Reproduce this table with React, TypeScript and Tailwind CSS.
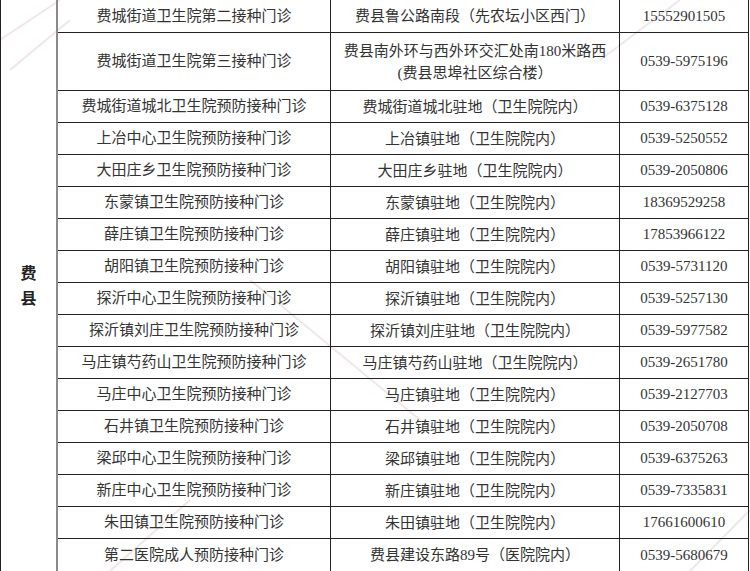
import React from "react";

type Row = { name: string; addr: string[]; phone: string; h: string };

const rows: Row[] = [
  { name: "费城街道卫生院第二接种门诊", addr: ["费县鲁公路南段（先农坛小区西门）"], phone: "15552901505", h: "h-[33px]" },
  { name: "费城街道卫生院第三接种门诊", addr: ["费县南外环与西外环交汇处南180米路西", "(费县思埠社区综合楼）"], phone: "0539-5975196", h: "h-[58px]" },
  { name: "费城街道城北卫生院预防接种门诊", addr: ["费城街道城北驻地（卫生院院内）"], phone: "0539-6375128", h: "h-[32px]" },
  { name: "上冶中心卫生院预防接种门诊", addr: ["上冶镇驻地（卫生院院内）"], phone: "0539-5250552", h: "h-[32px]" },
  { name: "大田庄乡卫生院预防接种门诊", addr: ["大田庄乡驻地（卫生院院内）"], phone: "0539-2050806", h: "h-[32px]" },
  { name: "东蒙镇卫生院预防接种门诊", addr: ["东蒙镇驻地（卫生院院内）"], phone: "18369529258", h: "h-[32px]" },
  { name: "薛庄镇卫生院预防接种门诊", addr: ["薛庄镇驻地（卫生院院内）"], phone: "17853966122", h: "h-[32px]" },
  { name: "胡阳镇卫生院预防接种门诊", addr: ["胡阳镇驻地（卫生院院内）"], phone: "0539-5731120", h: "h-[32px]" },
  { name: "探沂中心卫生院预防接种门诊", addr: ["探沂镇驻地（卫生院院内）"], phone: "0539-5257130", h: "h-[32px]" },
  { name: "探沂镇刘庄卫生院预防接种门诊", addr: ["探沂镇刘庄驻地（卫生院院内）"], phone: "0539-5977582", h: "h-[32px]" },
  { name: "马庄镇芍药山卫生院预防接种门诊", addr: ["马庄镇芍药山驻地（卫生院院内）"], phone: "0539-2651780", h: "h-[32px]" },
  { name: "马庄中心卫生院预防接种门诊", addr: ["马庄镇驻地（卫生院院内）"], phone: "0539-2127703", h: "h-[32px]" },
  { name: "石井镇卫生院预防接种门诊", addr: ["石井镇驻地（卫生院院内）"], phone: "0539-2050708", h: "h-[32px]" },
  { name: "梁邱中心卫生院预防接种门诊", addr: ["梁邱镇驻地（卫生院院内）"], phone: "0539-6375263", h: "h-[32px]" },
  { name: "新庄中心卫生院预防接种门诊", addr: ["新庄镇驻地（卫生院院内）"], phone: "0539-7335831", h: "h-[32px]" },
  { name: "朱田镇卫生院预防接种门诊", addr: ["朱田镇驻地（卫生院院内）"], phone: "17661600610", h: "h-[32px]" },
  { name: "第二医院成人预防接种门诊", addr: ["费县建设东路89号（医院院内）"], phone: "0539-5680679", h: "h-[32px]" },
];

// faint diagonal watermark lines drawn behind the table
const Watermark = () => (
  <svg className="pointer-events-none absolute inset-0" width="750" height="571">
    <g stroke="#f1e6e6" strokeWidth="2" fill="none">
      <path d="M0 40 L60 0" />
      <path d="M10 70 L70 20" />
      <path d="M600 60 L680 0" />
      <path d="M250 280 L420 420" />
      <path d="M110 571 L190 500" />
      <path d="M690 571 L750 510" />
    </g>
  </svg>
);

export default function App() {
  return (
    <div
      className="relative w-[750px] h-[571px] overflow-hidden bg-white text-[15px] text-[#333]"
      style={{ fontFamily: '"Liberation Serif", "Noto Sans CJK SC", serif' }}
    >
      <Watermark />
      <div className="relative flex w-[749px] border-l border-r border-b border-[#222]">
        <div className="w-[57px] border-r-2 border-[#8a8a8a] flex flex-col items-center justify-center text-[16px] font-bold leading-[25px] text-[#222] pt-[1px]">
          <span>费</span>
          <span>县</span>
        </div>
        <div className="flex-1 flex flex-col">
          {rows.map((r, i) => (
            <div
              key={i}
              className={`flex ${r.h} ${i < rows.length - 1 ? "border-b border-[#222]" : ""}`}
            >
              <div className="w-[273px] border-r border-[#222] flex items-center justify-center">
                {r.name}
              </div>
              <div className="w-[289px] border-r border-[#222] flex flex-col items-center justify-center leading-[22px]">
                {r.addr.map((a, j) => (
                  <span key={j}>{a}</span>
                ))}
              </div>
              <div className="flex-1 flex items-center justify-center">{r.phone}</div>
            </div>
          ))}
        </div>
      </div>
    </div>
  );
}
